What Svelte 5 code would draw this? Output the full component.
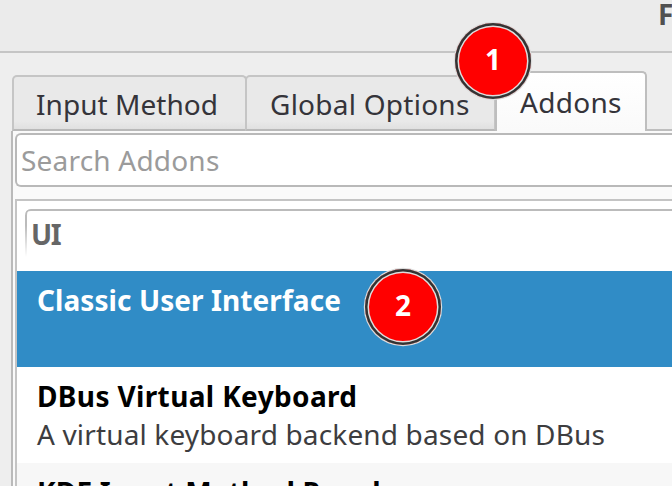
<script>
  const rows = [
    { title: 'Classic User Interface', detail: '', kind: 'classic selected' },
    { title: 'DBus Virtual Keyboard', detail: 'A virtual keyboard backend based on DBus', kind: 'dbus' },
    { title: 'KDE Input Method Panel', detail: '', kind: 'kde alternate' }
  ];
</script>

<main class="window">
  <header><b>F</b></header>
  <nav>
    <button class="tab input"><span>Input Method</span></button>
    <button class="tab global"><span>Global Options</span></button>
    <button class="tab addons"><span>Addons</span></button>
    <div class="rest"></div>
  </nav>
  <section class="panel">
    <div class="search"><span>Search Addons</span></div>
    <div class="list">
      <div class="category"><div class="group"><span>UI</span></div></div>
      {#each rows as row}
        <div class="row {row.kind}">
          <div class="title"><span>{row.title}</span></div>
          {#if row.detail}<div class="detail"><span>{row.detail}</span></div>{/if}
        </div>
      {/each}
    </div>
  </section>
  <div class="badge one">1</div>
  <div class="badge two">2</div>
</main>

<style>
  :global(body) { margin: 0; overflow: hidden; }
  * { box-sizing: border-box; }
  .window {
    position: relative; width: 672px; height: 486px; overflow: hidden;
    display: flex; flex-direction: column;
    background: #eeeeee; color: #3b3b3b;
    font: 28px/38px "Noto Sans", "Open Sans", sans-serif; white-space: nowrap;
  }
  header {
    flex: none; height: 53px; background: #ebebeb; border-bottom: 2px solid #c5c5c5;
    padding-left: 658px; overflow: hidden; color: #505050; line-height: 28px;
  }
  nav { flex: none; display: flex; align-items: flex-end; height: 78px; padding-left: 12px; }
  .tab {
    display: flex; align-items: flex-start;
    height: 56px; padding: 8px 0 0 24px; margin: 0; text-align: left;
    border: 2px solid #c5c5c5; border-bottom-color: #b9b9b9; border-radius: 5px 5px 0 0;
    background: linear-gradient(#e9e9e9 85%, #e0e0e0); color: #35343a;
    font: inherit; line-height: 38px;
  }
  .input { width: 235px; padding-left: 22px; letter-spacing: 0.05px; }
  .global { width: 251px; margin-left: -2px; padding-left: 23px; letter-spacing: 0.25px; }
  .addons {
    height: 60px; width: 152px; margin-left: -1px; padding: 10px 0 0 23px; letter-spacing: 0.3px;
    background: linear-gradient(#ffffff, #fafafa); border-color: #bebebe; border-bottom: 0;
  }
  .rest { flex: 1; height: 2px; background: #bebebe; }
  .panel {
    flex: none; height: 355px; width: 662px; margin-left: 11px; padding: 2px 0 0 2px;
    border-left: 2px solid #bababa; background: #fafafa;
  }
  .search {
    height: 54px; border: 2px solid #b9b9b9; border-right: 0; border-radius: 6px 0 0 6px;
    background: #fff; color: #9b9b9b; padding: 6px 0 0 4px; letter-spacing: 0.2px;
  }
  .list { margin-top: 12px; height: 290px; border: 2px solid #c4c4c4; border-width: 2px 0 0 2px; background: #fff; }
  .category { height: 70px; padding: 8px 0 0 8px; }
  .group {
    position: relative; height: 50px; border-top: 2px solid #bbb; border-top-left-radius: 6px;
    padding: 4px 0 0 6px; font-weight: 700; color: #666; letter-spacing: -1.4px;
  }
  .group::before {
    content: ''; position: absolute; left: 0; top: -2px; width: 6px; height: 48px;
    border-left: 2px solid #bbb; border-top-left-radius: 6px;
    mask-image: linear-gradient(#000 35%, transparent);
  }
  .row { height: 96px; padding: 10px 0 0 20px; color: #000; }
  .title { font-weight: 700; height: 38px; letter-spacing: 0.08px; }
  .dbus .title { letter-spacing: 0.36px; }
  .kde .title { letter-spacing: 0.18px; }
  .detail { color: #3d3d3f; letter-spacing: 0.15px; }
  .selected { background: #308cc6; color: #fff; }
  .alternate { background: #f7f7f7; }
  .badge {
    position: absolute; width: 76px; height: 76px; border-radius: 50%;
    background: #f00; color: #fff;
    box-shadow: inset 0 0 0 2.5px #333, inset 0 0 0 4px #ddd, 0 0 0 1.2px #ddd;
    text-align: center; font-weight: 700; line-height: 73px;
  }
  .one { left: 455px; top: 23px; line-height: 72px; }
  .two { left: 365px; top: 269px; }
</style>
